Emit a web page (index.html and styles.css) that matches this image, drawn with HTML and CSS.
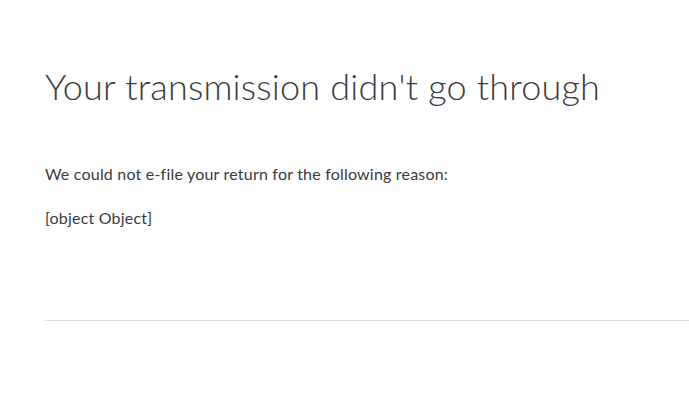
FILE: index.html
```html
<!DOCTYPE html>
<html lang="en">
<head>
<meta charset="utf-8">
<title>Transmission error</title>
<link rel="stylesheet" href="styles.css">
</head>
<body>
<main class="page">
  <h1 class="title">Your transmission didn't go through</h1>
  <p class="text">We could not e-file your return for the following reason:</p>
  <p class="text reason">[object Object]</p>
  <hr class="divider">
</main>
</body>
</html>
```
FILE: styles.css
```css
html, body {
  margin: 0;
  padding: 0;
  background: #ffffff;
}
body {
  font-family: Lato, "Noto Sans", sans-serif;
  color: #393a3d;
  font-variant-ligatures: none;
}
.page {
  padding: 64px 0 0 45px;
}
.title {
  margin: 0;
  font-size: 36px;
  font-weight: 300;
  line-height: 44px;
  letter-spacing: 0.2px;
  color: #393a3d;
}
.text {
  margin: 0;
  font-size: 16px;
  line-height: 24px;
  letter-spacing: 0.2px;
}
.page .text:first-of-type {
  margin-top: 54px;
}
.reason {
  margin-top: 20px;
}
.divider {
  margin: 90px 0 0 0;
  border: 0;
  height: 1px;
  background: #dcdcdc;
}
```
